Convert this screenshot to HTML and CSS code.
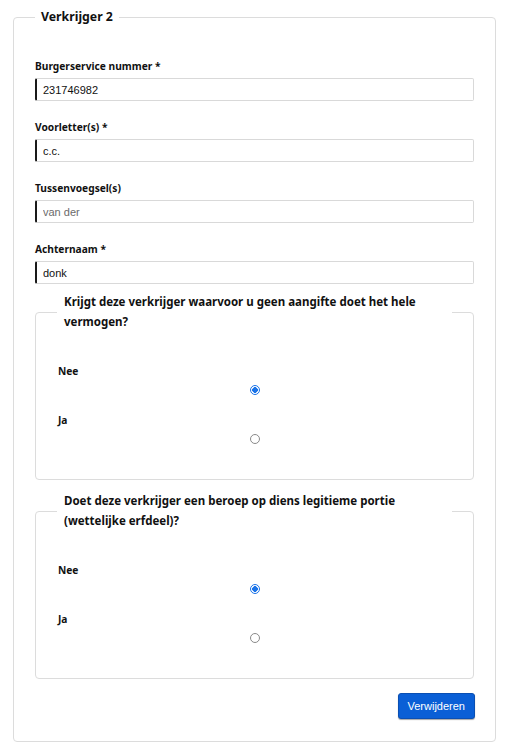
FILE: index.html
```html
<!DOCTYPE html>
<html lang="nl">
<head>
<meta charset="utf-8">
<title>Verkrijger 2</title>
<link rel="stylesheet" href="styles.css">
</head>
<body>
<div class="page">
  <fieldset class="card">
    <legend class="card-legend">Verkrijger 2</legend>
    <div class="field first">
      <label class="label" for="bsn">Burgerservice nummer *</label>
      <input class="input" id="bsn" type="text" value="231746982">
    </div>
    <div class="field">
      <label class="label" for="vl">Voorletter(s) *</label>
      <input class="input" id="vl" type="text" value="c.c.">
    </div>
    <div class="field">
      <label class="label" for="tv">Tussenvoegsel(s)</label>
      <input class="input muted" id="tv" type="text" value="van der">
    </div>
    <div class="field">
      <label class="label" for="an">Achternaam *</label>
      <input class="input" id="an" type="text" value="donk">
    </div>

    <fieldset class="question q1">
      <legend class="q-legend">Krijgt deze verkrijger waarvoor u geen aangifte doet het hele vermogen?</legend>
      <div class="option">
        <label class="opt-label" for="q1n">Nee</label>
        <div class="radio-wrap"><input class="radio" type="radio" id="q1n" name="q1" checked></div>
      </div>
      <div class="option">
        <label class="opt-label" for="q1j">Ja</label>
        <div class="radio-wrap"><input class="radio" type="radio" id="q1j" name="q1"></div>
      </div>
    </fieldset>

    <fieldset class="question q2">
      <legend class="q-legend">Doet deze verkrijger een beroep op diens legitieme portie (wettelijke erfdeel)?</legend>
      <div class="option">
        <label class="opt-label" for="q2n">Nee</label>
        <div class="radio-wrap"><input class="radio" type="radio" id="q2n" name="q2" checked></div>
      </div>
      <div class="option">
        <label class="opt-label" for="q2j">Ja</label>
        <div class="radio-wrap"><input class="radio" type="radio" id="q2j" name="q2"></div>
      </div>
    </fieldset>

    <div class="actions">
      <button class="btn" type="button">Verwijderen</button>
    </div>
  </fieldset>
</div>
</body>
</html>
```
FILE: styles.css
```css
html, body {
  margin: 0;
  padding: 0;
  background: #fff;
}
body {
  font-family: "Noto Sans", "Liberation Sans", sans-serif;
  color: #111;
}
.page {
  padding: 9px 13px 14px 13px;
}
.card {
  margin: 0;
  border: 1px solid #dcdcdc;
  border-radius: 4px;
  padding: 0 21px 22px 21px;
  min-width: 0;
}
.card-legend {
  padding: 0 6px;
  font-size: 12.3px;
  font-weight: 700;
  line-height: 16px;
}
.field {
  display: flex;
  flex-direction: column;
  margin-top: 18px;
}
.field.first {
  margin-top: 33px;
}
.label {
  font-size: 10.2px;
  font-weight: 700;
  line-height: 16px;
  margin-bottom: 4px;
}
.input {
  box-sizing: border-box;
  height: 23px;
  width: 100%;
  margin: 0;
  border: 1px solid #d9d9d9;
  border-left: 2px solid #1a1a1a;
  border-radius: 2px;
  padding: 0 6px;
  font-family: "Liberation Sans", Arial, sans-serif;
  font-size: 11px;
  color: #111;
  background: #fff;
}
.input.muted {
  color: #6b6b6b;
}
.question {
  margin: 8px 0 0 0;
  border: 1px solid #dcdcdc;
  border-radius: 4px;
  padding: 0 21px 35px 21px;
  min-width: 0;
}
.question.q2 {
  margin-top: 11px;
}
.q-legend {
  box-sizing: border-box;
  width: 100%;
  padding: 0 7px;
  font-size: 11.5px;
  font-weight: 700;
  line-height: 20px;
}
.option {
  display: flex;
  flex-direction: column;
  margin-top: 17px;
}
.option:first-of-type {
  margin-top: 31px;
}
.opt-label {
  font-size: 10.2px;
  font-weight: 700;
  line-height: 16px;
  padding-left: 1px;
}
.radio-wrap {
  display: flex;
  justify-content: center;
  margin-top: 6px;
}
.radio {
  appearance: none;
  -webkit-appearance: none;
  box-sizing: border-box;
  width: 10px;
  height: 10px;
  margin: 0;
  border: 1px solid #8a8a8a;
  border-radius: 50%;
  background: #fff;
}
.radio:checked {
  border: 1px solid #1a73e8;
  background: radial-gradient(circle, #1a73e8 0 2.6px, #fff 3px);
}
.actions {
  display: flex;
  justify-content: flex-end;
  margin-top: 14px;
}
.btn {
  box-sizing: border-box;
  height: 26px;
  padding: 0 9px;
  border: 1px solid #0a4fb3;
  border-radius: 3px;
  background: #0a5fd6;
  box-shadow: 0 1px 1px rgba(0, 0, 0, 0.35);
  color: #fff;
  font-family: "Liberation Sans", Arial, sans-serif;
  font-size: 11px;
  margin-right: -1px;
}
```
